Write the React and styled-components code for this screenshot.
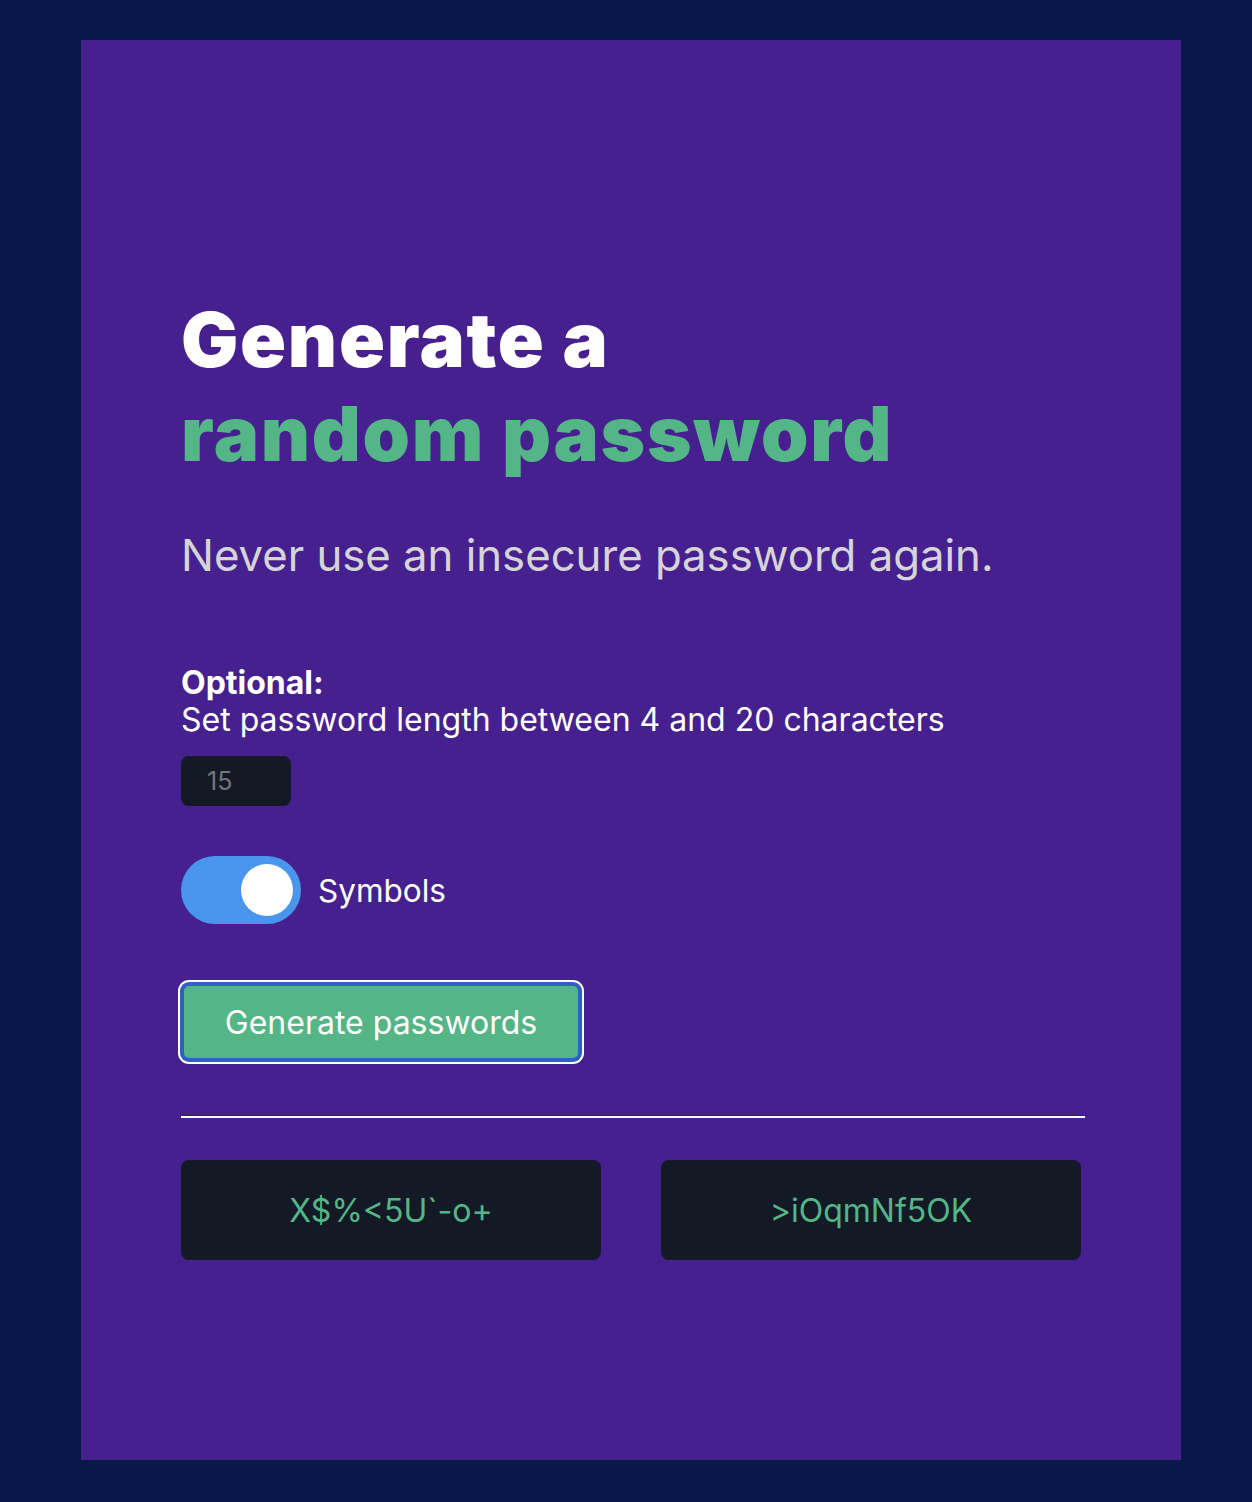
import React, { useState } from 'react';
import styled, { createGlobalStyle } from 'styled-components';

const GlobalStyle = createGlobalStyle`
  body {
    margin: 0;
    background-color: #081849;
    font-family: Inter, "Noto Sans", sans-serif;
  }
`;

const Page = styled.div`
  padding: 40px 71px 42px 81px;
`;

const Card = styled.main`
  background-color: #47208f;
  width: 1100px;
  min-height: 1420px;
  box-sizing: border-box;
  padding: 252px 100px 0 100px;
`;

const Title = styled.h1`
  margin: 0;
  font-size: 76px;
  font-weight: 900;
  line-height: 94px;
  color: #ffffff;
  letter-spacing: 1.7px;
`;

const Accent = styled.span`
  display: block;
  color: #54b586;
`;

const Subtitle = styled.p`
  margin: 50px 0 0 0;
  font-size: 43.7px;
  color: #d5d4d8;
  line-height: 1.2;
`;

const Label = styled.div`
  margin-top: 82px;
  font-size: 32px;
  color: #ffffff;
  line-height: 37px;
`;

const Bold = styled.strong`
  display: block;
  font-weight: 700;
`;

const LengthInput = styled.input`
  display: block;
  margin-top: 18px;
  width: 110px;
  height: 50px;
  box-sizing: border-box;
  border: 0;
  border-radius: 8px;
  background-color: #131a26;
  color: #777777;
  font-family: Inter, sans-serif;
  font-size: 25px;
  padding: 0 0 0 26px;
  outline: none;
`;

const ToggleRow = styled.label`
  display: flex;
  align-items: center;
  gap: 17px;
  margin-top: 50px;
  font-size: 31.5px;
  color: #ffffff;
  cursor: pointer;
`;

const Track = styled.span`
  position: relative;
  width: 120px;
  height: 68px;
  border-radius: 34px;
  background-color: ${props => (props.on ? '#4a96ee' : '#6b6b80')};
`;

const Knob = styled.span`
  position: absolute;
  top: 8px;
  left: ${props => (props.on ? '60px' : '8px')};
  width: 52px;
  height: 52px;
  border-radius: 50%;
  background-color: #ffffff;
`;

const GenerateButton = styled.button`
  display: block;
  margin-top: 59px;
  width: 400px;
  height: 78px;
  box-sizing: border-box;
  background-color: #54b586;
  color: #ffffff;
  border: 3px solid #2f5fc9;
  border-radius: 8px;
  box-shadow: 0 0 0 1px #2f5fc9, 0 0 0 3px #ffffff;
  font-family: Inter, sans-serif;
  font-size: 32px;
  cursor: pointer;
`;

const Divider = styled.hr`
  margin: 54px 0 0 0;
  width: 904px;
  border: 0;
  border-top: 1px solid #2a10a8;
  border-bottom: 2px solid #ffffff;
`;

const Results = styled.div`
  display: grid;
  grid-template-columns: 420px 420px;
  gap: 60px;
  margin-top: 42px;
`;

const Password = styled.div`
  height: 100px;
  border-radius: 8px;
  background-color: #131a26;
  color: #54b586;
  font-size: 32px;
  display: flex;
  align-items: center;
  justify-content: center;
`;

export default function App() {
  const [length, setLength] = useState('');
  const [symbols, setSymbols] = useState(true);
  const passwords = ['X$%<5U`-o+', '>iOqmNf5OK'];

  return (
    <Page>
      <GlobalStyle />
      <Card>
        <Title>
          Generate a
          <Accent>random password</Accent>
        </Title>
        <Subtitle>Never use an insecure password again.</Subtitle>
        <Label>
          <Bold>Optional:</Bold>
          Set password length between 4 and 20 characters
        </Label>
        <LengthInput
          type="number"
          placeholder="15"
          value={length}
          onChange={e => setLength(e.target.value)}
        />
        <ToggleRow onClick={() => setSymbols(!symbols)}>
          <Track on={symbols ? 1 : 0}>
            <Knob on={symbols ? 1 : 0} />
          </Track>
          Symbols
        </ToggleRow>
        <GenerateButton>Generate passwords</GenerateButton>
        <Divider />
        <Results>
          {passwords.map(p => (
            <Password key={p}>{p}</Password>
          ))}
        </Results>
      </Card>
    </Page>
  );
}
